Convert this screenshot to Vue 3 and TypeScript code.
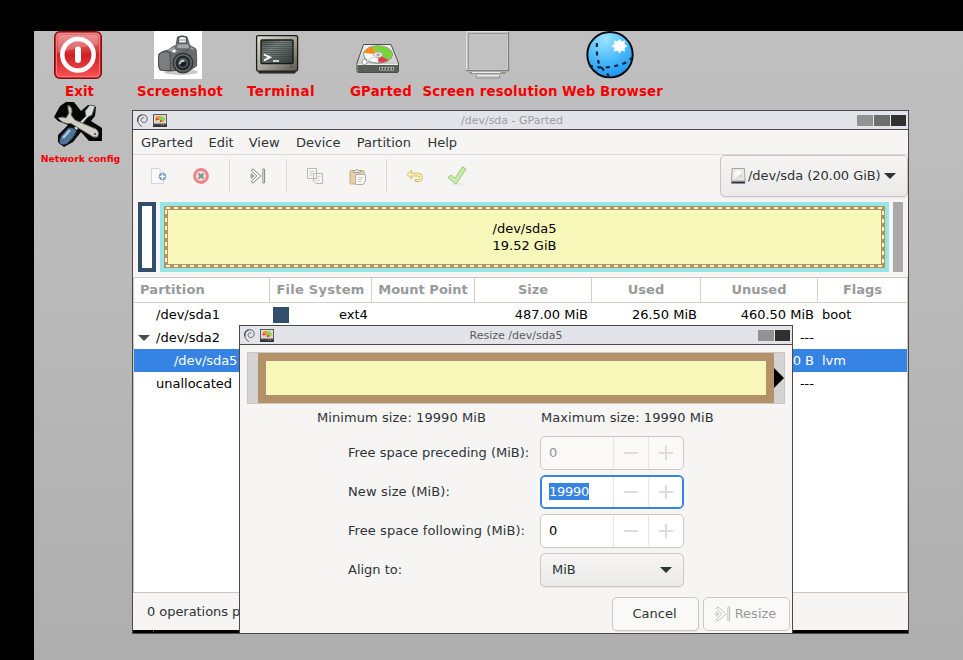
<script setup lang="ts">
interface Row {
  name: string
  depth: number
  open?: boolean
  selected?: boolean
  color?: string
  fs?: string
  size?: string
  used?: string
  unused: string
  flags?: string
}

const menus: string[] = ['GParted', 'Edit', 'View', 'Device', 'Partition', 'Help']
const columns: string[] = ['Partition', 'File System', 'Mount Point', 'Size', 'Used', 'Unused', 'Flags']
const rows: Row[] = [
  { name: '/dev/sda1', depth: 0, color: '#314e6c', fs: 'ext4', size: '487.00 MiB', used: '26.50 MiB', unused: '460.50 MiB', flags: 'boot' },
  { name: '/dev/sda2', depth: 0, open: true, unused: '---' },
  { name: '/dev/sda5', depth: 1, selected: true, unused: '0 B', flags: 'lvm' },
  { name: 'unallocated', depth: 0, unused: '---' },
]
const fields = [
  { label: 'Free space preceding (MiB):', value: '0', state: 'disabled' },
  { label: 'New size (MiB):', value: '19990', state: 'focused' },
  { label: 'Free space following (MiB):', value: '0', state: '' },
]
</script>

<template>
  <div class="screen">
    <svg class="defs" width="0" height="0">
      <defs>
        <linearGradient id="red" x1="0" y1="0" x2="0" y2="1">
          <stop offset="0" stop-color="#e97c7c" /><stop offset=".4" stop-color="#d63a3d" /><stop offset=".5" stop-color="#cf2024" /><stop offset="1" stop-color="#fb5355" />
        </linearGradient>
        <radialGradient id="globe" cx=".4" cy=".15" r=".95">
          <stop offset="0" stop-color="#9fe3ff" /><stop offset=".5" stop-color="#4cbcfc" /><stop offset="1" stop-color="#1189ee" />
        </radialGradient>
        <linearGradient id="crt" x1="0" y1="0" x2="1" y2="1">
          <stop offset="0" stop-color="#454d4a" /><stop offset=".35" stop-color="#75807b" /><stop offset="1" stop-color="#343a38" />
        </linearGradient>
        <linearGradient id="bezel" x1="0" y1="0" x2="1" y2="1">
          <stop offset="0" stop-color="#e3e0d8" /><stop offset=".5" stop-color="#a9a69a" /><stop offset="1" stop-color="#5b594f" />
        </linearGradient>
        <linearGradient id="metal" x1="0" y1="0" x2="0" y2="1">
          <stop offset="0" stop-color="#f2f2f0" /><stop offset="1" stop-color="#b9bbb8" />
        </linearGradient>
      </defs>
      <symbol id="swirl" viewBox="0 0 11 13">
        <path d="M4.500 12.300C1.800 10.800.6 8.400.7 6 .9 2.900 3 .7 5.900.7 8.700.7 10.400 2.600 10.200 5 10 7.400 8.300 8.800 6.400 8.500 4.700 8.300 3.800 7 4.200 5.400 4.600 4 5.700 3.500 6.900 3.900" fill="none" stroke="#606267" stroke-width="1" stroke-linecap="round" />
        <path d="M.8 7.500C.4 4.500 1.800 1.800 4.500.9" fill="none" stroke="#4a4c51" stroke-width="1.200" />
      </symbol>
      <symbol id="miniapp" viewBox="0 0 14 13">
        <rect width="14" height="13" fill="#5a5d5a" /><rect x="1" y="1" width="12" height="8.500" fill="#d9dad6" />
        <ellipse cx="7" cy="5.200" rx="5" ry="3.200" fill="#f4c9a9" /><path d="M6 5L5 2.200Q10 1 12 5L10.500 7.500Z" fill="#7edc45" /><path d="M7 5L2 4.600 3.500 2.600 6.500 1.900Z" fill="#fb8b28" /><path d="M7 5.500L2.500 6.500 3 4.300Z" fill="#e8383b" /><path d="M7 5.500L7 8.200 10.500 7.200Z" fill="#e8383b" />
        <path d="M0 10.500H14V13H0Z" fill="#333633" /><path d="M8 11H12" stroke="#a5a5a5" stroke-width="1" stroke-dasharray="1 1" />
      </symbol>
      <symbol id="resize" viewBox="0 0 16 16">
        <path d="M1.200 2.400L2.900.900 10.800 8 2.900 15.100 1.200 13.600 6.800 8Z" fill="#fff" stroke="currentColor" stroke-width=".9" stroke-linejoin="round" />
        <path d="M1 5.500L3.900 8 1 10.500" fill="none" stroke="currentColor" stroke-width=".8" />
        <circle cx="1.500" cy="8" r="1" fill="#fff" stroke="currentColor" stroke-width=".8" />
        <rect x="12.900" y=".9" width="1.700" height="14.200" rx=".5" fill="#fff" stroke="currentColor" stroke-width=".9" />
      </symbol>
    </svg>

    <main class="desktop">
      <div class="shortcut exit">
        <svg width="48" height="48" viewBox="0 0 48 48">
          <rect x=".8" y=".8" width="46.400" height="46.400" rx="5" fill="url(#red)" stroke="#8c0d10" stroke-width="1.600" />
          <rect x="2.500" y="2.500" width="43" height="43" rx="4" fill="none" stroke="#f08b8b" stroke-width=".8" />
          <path d="M4 8Q4 4 8 4H40Q44 4 44 8V14Q28 15 4 22Z" fill="#fff" opacity=".22" />
          <circle cx="24" cy="23.700" r="15.700" fill="none" stroke="#fff" stroke-width="4.500" />
          <path d="M24 18.500V29" stroke="#fff" stroke-width="6" stroke-linecap="round" />
        </svg>
        <span>Exit</span>
      </div>
      <div class="shortcut shot">
        <svg width="48" height="48" viewBox="0 0 48 48">
          <rect width="48" height="48" fill="#fff" />
          <ellipse cx="27" cy="41" rx="17" ry="3" fill="#ccc8c4" />
          <path d="M5 23Q8 20 14 19L20 15H37L42 18Q43 24 42.500 35L38 38 16 40 6 39Q3.500 35 5 23Z" fill="#696b6c" stroke="#404244" stroke-width=".8" />
          <path d="M5 23Q10 19 16 22L16.500 39.500Q9 40 6 38.500 3.500 34 5 23Z" fill="#7c7e7f" stroke="#3c3e3f" stroke-width=".8" />
          <path d="M13 19L21 15.500H37L41 19 36 18 19 21Z" fill="#a0a2a3" />
          <path d="M21.500 17L23.500 6Q28 3.500 33 6L36.500 17 34 19H23Z" fill="#77797a" stroke="#47494a" stroke-width=".8" />
          <path d="M24.500 12V6.500Q28 4.500 32.500 6.500V12Z" fill="#f5f6f6" stroke="#47494a" stroke-width="1.200" /><path d="M24.500 9H32.500" stroke="#8b8d8e" />
          <path d="M24 13.500H34L35 17H23Z" fill="#a4a6a7" />
          <rect x="18.500" y="19" width="3" height="2.500" fill="#fff" />
          <circle cx="29" cy="32" r="10.500" fill="#36393b" /><circle cx="29" cy="32" r="8.800" fill="#6d7274" /><circle cx="29" cy="32" r="7.500" fill="#24292c" /><circle cx="29" cy="32" r="5" fill="#536067" /><circle cx="29" cy="32.500" r="3.300" fill="#161c20" />
          <path d="M25.500 33L28 29.500 30.500 30.500" fill="none" stroke="#d5e0e5" stroke-width="1.500" />
        </svg>
        <span>Screenshot</span>
      </div>
      <div class="shortcut term">
        <svg width="48" height="48" viewBox="0 0 48 48">
          <path d="M6 39H42V42H6Z" fill="#4b4a42" stroke="#11120f" />
          <rect x="3.600" y="4.600" width="41" height="35.500" rx="1.500" fill="url(#bezel)" stroke="#1c1d19" stroke-width="1.300" />
          <rect x="8" y="9" width="32" height="23.500" rx="1" fill="url(#crt)" stroke="#171a18" stroke-width="1.400" />
          <path v-for="n in 10" :key="n" :d="`M9 ${9 + n * 2}.5H39`" stroke="#2c3330" stroke-width=".7" opacity=".55" />
          <path d="M11 23.500L17 26.300 11 29.300" fill="none" stroke="#fff" stroke-width="1.900" /><path d="M20 30H26" stroke="#fff" stroke-width="1.500" />
          <path d="M37 36.500L38 35.500H40" fill="none" stroke="#46453e" />
        </svg>
        <span>Terminal</span>
      </div>
      <div class="shortcut gpart">
        <svg width="48" height="48" viewBox="0 0 48 48">
          <path d="M3 32L9.500 13.500H37L44.500 32V40Q44.500 41.500 43 41.500H4.500Q3 41.500 3 40Z" fill="url(#metal)" stroke="#4b4e4b" />
          <path d="M3.500 34H44V41H4Z" fill="#5a5e5b" /><path d="M3.500 33.500H44" stroke="#edeeec" />
          <ellipse cx="24" cy="23.500" rx="14.500" ry="8.700" fill="#fff" stroke="#778076" />
          <path d="M24 23.500L18 15.700A14 8.200 0 0 1 38 23.500 14 8.200 0 0 1 33.500 29.300Z" fill="#77d536" />
          <path d="M24 23.500L10.500 22A14 8.200 0 0 1 18 15.800Z" fill="#ff8b17" />
          <path d="M24 23.500L24.500 31.700A14 8.200 0 0 0 34.500 29Z" fill="#e4384b" />
          <ellipse cx="24" cy="23.700" rx="4.500" ry="2.800" fill="#e5e6e4" stroke="#aaa" /><ellipse cx="24" cy="23.700" rx="1.600" ry="1" fill="#999" />
          <path d="M11 31L16 28 22 25" fill="none" stroke="#dfe1de" stroke-width="1.800" /><circle cx="10.500" cy="31" r="2.600" fill="#fff" stroke="#9ca09b" />
          <rect x="25" y="36" width="15" height="3.500" fill="#aab0ab" /><path d="M26 37.700H39" stroke="#343936" stroke-width="2" stroke-dasharray="1.500 1.500" />
        </svg>
        <span>GParted</span>
      </div>
      <div class="shortcut reso">
        <svg width="48" height="48" viewBox="0 0 48 48">
          <rect x="2.500" y=".5" width="42" height="39" fill="#c5c5c5" stroke="#dedede" /><path d="M44.500 1V39.500H2" fill="none" stroke="#7e7e7e" stroke-width="1.300" />
          <rect x="4.500" y="2.500" width="38" height="35" fill="#c1c1c1" stroke="#979797" /><path d="M5 38H43V3" fill="none" stroke="#e3e3e3" />
          <path d="M5.500 41.500H41.500V42.500H5.500ZM12.500 44.500H35.500V47H12.500Z" fill="#c8c8c8" stroke="#939393" /><path d="M13 44.500H35M8 41.500H36" stroke="#ececec" /><path d="M36 41H38" stroke="#74e16a" stroke-width="1.500" />
        </svg>
        <span>Screen resolution</span>
      </div>
      <div class="shortcut web">
        <svg width="48" height="48" viewBox="0 0 48 48">
          <circle cx="24" cy="23.700" r="22.700" fill="url(#globe)" stroke="#05090c" stroke-width="1.900" />
          <path d="M11 12Q10 22 12.500 31 15 37 23 45M3 34.500Q21 39.500 40 31.500L46 27" fill="none" stroke="#072238" stroke-width="2.200" stroke-dasharray="4 4.500" />
          <path d="M33.500 7.500L35.500 10.500 39 9.500 38.500 13 41.500 15 38.500 17 39 20.500 35.500 19.500 33.500 22.500 31.500 19.500 28 20.500 28.500 17 25.500 15 28.500 13 28 9.500 31.500 10.500Z" fill="#fff" />
        </svg>
        <span>Web Browser</span>
      </div>
      <div class="shortcut net">
        <svg width="48" height="48" viewBox="0 0 48 48">
          <path d="M0 16L6 5 12 1H20L27 10 34 4 42 6 41 15 37 20 48 27V40H35L27 31 19 41 10 46 4 41V34L14 24 4 20Z" fill="#050606" />
          <path d="M17 30L32 15 31 10 36 4 41 5 38 14 34 16 20 32Z" fill="#d7dcda" stroke="#55605f" />
          <path d="M7 35L14 27Q19 25 23 30 20 37 13 43 9 45 6 43 4 41 7 35Z" fill="#4f7295" stroke="#17283b" /><path d="M9 37L16 29" stroke="#a7c4dd" stroke-width="2.500" />
          <path d="M14 4Q20 7 17 14L21 19 42 28Q46 31 43.500 36 39 37 36 34L17 22.500Q9 23.500 4 17L8 16 12 17 15 12 14 8Z" fill="#d2d0c6" stroke="#66675f" />
          <circle cx="41" cy="33" r="1" fill="#444" />
        </svg>
        <span>Network config</span>
      </div>

      <section class="window main">
        <header class="titlebar">
          <svg class="swirl"><use href="#swirl" /></svg><svg class="mini"><use href="#miniapp" /></svg>
          <span class="title dim">/dev/sda - GParted</span>
          <i class="wb light" /><i class="wb mid" /><i class="wb dark" />
        </header>
        <nav class="menubar"><span v-for="m in menus" :key="m">{{ m }}</span></nav>
        <div class="toolbar">
          <span class="tool"><svg width="16" height="16" viewBox="0 0 16 16"><path d="M.5.500H8L12.500 4.500V15.500H.5Z" fill="#f9f9f8" stroke="#d6d7d5" /><path d="M8 .5V4.500H12.500" fill="#e7e8e6" /><circle cx="11.500" cy="8.500" r="3.700" fill="#7793c6" /><path d="M11.500 5.700V11.300M8.700 8.500H14.300" stroke="#fff" stroke-width="1.500" /></svg></span>
          <span class="tool"><svg width="16" height="16" viewBox="0 0 16 16"><circle cx="8" cy="8" r="6.400" fill="#ebe4e2" stroke="#ef8585" stroke-width="3" /><path d="M5.500 5.500L10.500 10.500M10.500 5.500L5.500 10.500" stroke="#8e918f" stroke-width="2.200" /></svg></span>
          <i class="sep" />
          <span class="tool dark-ico"><svg width="16" height="16"><use href="#resize" /></svg></span>
          <i class="sep" />
          <span class="tool"><svg width="16" height="16" viewBox="0 0 16 16"><path d="M.5.500H9.500V10.500H.5ZM6.500 5.500H15.500V15.500H9L6.500 13Z" fill="#f6f6f5" stroke="#b7b9b7" /><path d="M2.500 3.500H7.500M2.500 5.500H6M2.500 7.500H5M9 8.500H13.500M9 10.500H12M9 12.500H13" stroke="#d1d2d1" /></svg></span>
          <span class="tool"><svg width="17" height="17" viewBox="0 0 17 17"><rect x="1" y="2.500" width="14" height="13.500" rx="1" fill="#ead1a5" stroke="#c9a77a" /><path d="M4.500 4.500V2.500H6.500Q8 0 9.500 2.500H11.500V4.500Z" fill="#ecece9" stroke="#9fa19f" /><path d="M6.500 6.500H16.500V13L14 16.500H6.500Z" fill="#f8f8f7" stroke="#afb1ad" /><path d="M9 9.500H14M9 11.500H13M9 13.500H12" stroke="#c8cac7" /></svg></span>
          <i class="sep wide" />
          <span class="tool"><svg width="18" height="16" viewBox="0 0 18 16"><path d="M5.500 2L1 6.500 5.500 11V8H12Q14 8 14 9.800 14 11 12.500 11.500H9V13.500H13Q16.500 13 16.500 9.500 16.500 5.500 12.500 5.200H5.500Z" fill="#f9efc0" stroke="#d6bd62" stroke-linejoin="round" /></svg></span>
          <span class="tool"><svg width="20" height="20" viewBox="0 0 20 20"><ellipse cx="11" cy="18" rx="7" ry="1.500" fill="#eaeae8" /><path d="M1 11.500L4 9 8 12.500 15.500.800 19 3 9 18Z" fill="#caefaa" stroke="#96c67c" stroke-linejoin="round" /></svg></span>
          <div class="device">
            <svg width="15" height="16" viewBox="0 0 15 16"><path d="M1 .5H13.500L14 13H.5Z" fill="#e8e9e7" stroke="#a5a7a4" /><path d="M.5 13.500H14V15.500H.5Z" fill="#2e3442" stroke="#888" stroke-width=".5" /><circle cx="7.300" cy="6.500" r="5" fill="#f7f7f6" stroke="#d4d4d1" stroke-width=".5" /><path d="M3.500 11.500L11 5V9Z" fill="#d3d4d1" /></svg>
            <span>/dev/sda (20.00 GiB)</span><i class="arrow" />
          </div>
        </div>
        <div class="disk">
          <div class="part ext" />
          <div class="part extended">
            <svg class="logical" width="721" height="62"><rect width="721" height="62" fill="#b39169" /><rect x="2" y="2" width="717" height="58" fill="none" stroke="#f8f8ba" stroke-width="2" stroke-dasharray="4 4" /><rect x="4" y="4" width="713" height="54" fill="#f8f8ba" /></svg>
            <div class="caption"><span>/dev/sda5</span><span>19.52 GiB</span></div>
          </div>
          <div class="part free" />
        </div>
        <div class="table">
          <div class="grid head"><span v-for="c in columns" :key="c">{{ c }}</span></div>
          <div v-for="r in rows" :key="r.name" class="grid row" :class="{ selected: r.selected }">
            <span class="name" :class="{ child: r.depth }"><i v-if="r.open" class="arrow expander" />{{ r.name }}</span>
            <span class="fs"><i v-if="r.color" class="swatch" :style="{ background: r.color }" /><b v-if="r.fs">{{ r.fs }}</b></span>
            <span />
            <span class="num">{{ r.size }}</span><span class="num">{{ r.used }}</span><span class="num">{{ r.unused }}</span><span class="flags">{{ r.flags }}</span>
          </div>
        </div>
        <footer class="status">0 operations pending</footer>
        <div class="shade"><i /></div>
      </section>

      <section class="window dialog">
        <header class="titlebar">
          <svg class="swirl"><use href="#swirl" /></svg><svg class="mini"><use href="#miniapp" /></svg>
          <span class="title">Resize /dev/sda5</span>
          <i class="wb light" /><i class="wb dark" />
        </header>
        <div class="resizer"><div class="space" /><div class="block" /><div class="handle"><i /></div></div>
        <div class="limits"><span>Minimum size: 19990 MiB</span><span>Maximum size: 19990 MiB</span></div>
        <div class="form">
          <template v-for="f in fields" :key="f.label">
            <label>{{ f.label }}</label>
            <div class="spin" :class="f.state"><div class="value"><span>{{ f.value }}</span></div><div class="step minus" /><div class="step plus" /></div>
          </template>
          <label>Align to:</label>
          <div class="select"><span>MiB</span><i class="arrow" /></div>
        </div>
        <div class="actions">
          <div class="btn">Cancel</div>
          <div class="btn off"><svg width="16" height="16"><use href="#resize" /></svg>Resize</div>
        </div>
      </section>
    </main>
  </div>
</template>

<style>
body { background: #000; overflow: hidden; }
</style>

<style scoped>
.screen { width: 963px; height: 660px; box-sizing: border-box; padding: 31px 0 0 34px; background: #000; overflow: hidden; font: 13px/16px "DejaVu Sans", sans-serif; color: #2e3436; white-space: nowrap; }
.screen * { box-sizing: border-box; }
.defs { position: absolute; }
svg { display: block; flex: none; }
.desktop { position: relative; height: 629px; background: linear-gradient(180deg, #bfbfbf, #bababa 40%, #aeaeae); }
.shortcut { position: absolute; display: flex; flex-direction: column; align-items: center; gap: 5px; width: 160px; color: #f40000; font-weight: bold; font-size: 13.333px; letter-spacing: .15px; }
.exit { left: -36px; top: 0; }
.shot { left: 64px; top: 0; }
.term { left: 163px; top: 0; }
.gpart { left: 264px; top: 0; }
.reso { left: 374px; top: 0; }
.web { left: 496px; top: 0; }
.net { left: -36px; top: 70px; gap: 2px; font-size: 9.300px; letter-spacing: 0; }
.exit span { padding-left: 3px; }
.shot span { padding-left: 4px; }
.net span { padding-left: 5px; }
.term span { padding-left: 8px; letter-spacing: .45px; }
.gpart span { padding-left: 6px; }
.reso span { padding-left: 4px; }
.web span { padding-left: 5px; }
.window { position: absolute; border: 1px solid #49494d; background: #f6f5f4; display: flex; flex-direction: column; }
.main { left: 98px; top: 79px; width: 777px; height: 524px; }
.dialog { left: 205px; top: 294px; width: 554px; height: 309px; }
.titlebar { height: 19px; flex: none; display: flex; align-items: center; background: #e3e4ea; border-bottom: 1px solid #49494d; padding: 0 2px 0 4px; font-size: 11px; }
.swirl { width: 11px; height: 13px; }
.mini { width: 14px; height: 13px; margin-left: 5px; }
.title { flex: 1; text-align: center; color: #5a5c60; padding-top: 2px; }
.dim { color: #9c9da1; }
.wb { width: 16px; height: 11px; margin-right: 1px; }
.wb.dark { width: 15px; margin-right: 0; background: #303030; }
.wb.mid { background: #6e6e6e; }
.wb.light { background: #929292; }
.menubar { height: 25px; flex: none; display: flex; align-items: center; gap: 16px; padding: 1px 0 0 8px; border-bottom: 1px solid #dcdad7; }
.menubar span:nth-child(2) { margin: 0 -1px; }
.menubar span:nth-child(n + 4) { margin-left: .4px; }
.menubar span:nth-child(2) { margin-left: -.5px; }
.toolbar { height: 42px; flex: none; display: flex; align-items: center; padding-left: 5px; }
.tool { width: 42px; height: 42px; display: flex; align-items: center; justify-content: center; }
.dark-ico { color: #717574; }
.sep { width: 1px; height: 34px; margin: 0 7px; background: #dbdad7; }
.sep.wide { margin-left: 8px; }
.device { margin-left: auto; width: 188px; height: 42px; border: 1px solid #c9c4bd; border-radius: 5px; background: linear-gradient(#f6f5f4, #ebeae8); display: flex; align-items: center; padding: 0 11px 0 10px; box-shadow: 0 1px 1px #0001; }
.device > span { margin-left: 2px; letter-spacing: -.07px; }
.arrow { width: 0; height: 0; border: 6px solid transparent; border-top-color: currentColor; border-bottom: 0; }
.device .arrow { margin-left: auto; }
.disk { height: 80px; flex: none; display: flex; gap: 4px; padding: 5px 5px; }
.part { height: 70px; }
.ext { width: 18px; border: 4px solid #314e6c; background: #fff; }
.extended { width: 729px; background: #97e5e4; padding: 4px; display: grid; place-items: center; color: #000; }
.logical, .caption { grid-area: 1 / 1; }
.caption { display: flex; flex-direction: column; line-height: 17px; text-align: center; }
.free { width: 10px; background: #a9a9a9; }
.table { height: 316px; flex: none; background: #fff; border: 1px solid #cdc7c2; color: #000; }
.grid { display: grid; grid-template-columns: 136px 102px 103px 117px 109px 117px 89px; align-items: center; height: 23px; }
.head { height: 25px; border-bottom: 1px solid #d5d0cc; color: #979a9b; font-weight: bold; align-items: stretch; line-height: 24px; text-align: center; }
.head span { border-right: 1px solid #d5d0cc; }
.head span:first-child { text-align: left; padding-left: 6px; letter-spacing: .1px; }
.head span:nth-child(2) { letter-spacing: .25px; }
.head span:last-child { border-right: 0; }
.name { display: flex; align-items: center; padding-left: 22px; }
.child { padding-left: 40px; }
.expander { margin: 0 6px 0 -18px; color: #4a4d4e; }
.fs { display: flex; align-items: center; }
.swatch { width: 16px; height: 16px; margin-left: 3px; }
.fs b { font-weight: normal; margin-left: 50px; }
.num { text-align: right; padding-right: 4px; }
.flags { padding-left: 4px; }
.row.selected { background: #3584e4; color: #fff; }
.row.selected .name { letter-spacing: -.08px; }
.status { height: 37px; flex: none; line-height: 37px; padding-left: 14px; letter-spacing: -.05px; }
.shade { height: 3px; background: #000; padding-left: 20px; }
.shade i { display: block; width: 1px; height: 2px; background: #555; }
.resizer { display: flex; flex: none; width: 538px; height: 52px; margin: 7px 0 0 7px; border: 1px solid #cdc7c2; background: #d3d3d3; }
.space { width: 10px; }
.block { width: 516px; background: #f8f8ba; border: 8px solid #b39169; }
.handle { display: flex; align-items: center; }
.handle i { border: 10px solid transparent; border-left-color: #000; border-right: 0; }
.limits { display: flex; gap: 55px; padding: 6px 0 0 77px; height: 32px; letter-spacing: .07px; }
.form { display: grid; grid-template-columns: 192px 144px; grid-auto-rows: 34px; row-gap: 5px; padding-left: 108px; align-items: center; }
.form label:nth-of-type(2) { letter-spacing: .13px; }
.form label:nth-of-type(3) { letter-spacing: .08px; }
.spin { height: 34px; display: grid; grid-template-columns: 1fr 35px 35px; border: 1px solid #cdc7c2; border-radius: 5px; background: #fff; color: #000; overflow: hidden; }
.spin.disabled { background: #faf9f8; color: #929595; }
.spin.focused { border-color: #3584e4; box-shadow: inset 0 0 0 1px #3584e4; }
.value { padding: 7px 0 0 8px; line-height: 17px; letter-spacing: -.27px; }
.value span { display: inline-block; }
.focused .value span { background: #3584e4; color: #fff; }
.step { border-left: 1px solid #e8e6e4; display: grid; place-items: center; }
.focused .step { margin: 1px 0; }
.step::before, .step::after { content: ""; grid-area: 1 / 1; width: 14px; height: 2px; background: #dcdcdc; }
.minus::after { display: none; }
.plus::after { width: 2px; height: 14px; }
.select { height: 34px; display: flex; align-items: center; justify-content: space-between; padding: 0 11px; border: 1px solid #cdc7c2; border-radius: 5px; background: linear-gradient(#f6f5f4, #ebeae8); box-shadow: 0 1px 1px #0001; }
.actions { display: flex; justify-content: flex-end; gap: 4px; margin-top: 10px; padding-right: 2px; }
.btn { width: 87px; height: 34px; display: flex; align-items: center; justify-content: center; gap: 4px; padding-right: 2px; border: 1px solid #cdc7c2; border-radius: 5px; background: #f9f9f8; box-shadow: 0 1px 1px #0001; }
.off { color: #979a9a; background: #faf9f8; box-shadow: none; }
.off svg { color: #b7b9b8; }
</style>
